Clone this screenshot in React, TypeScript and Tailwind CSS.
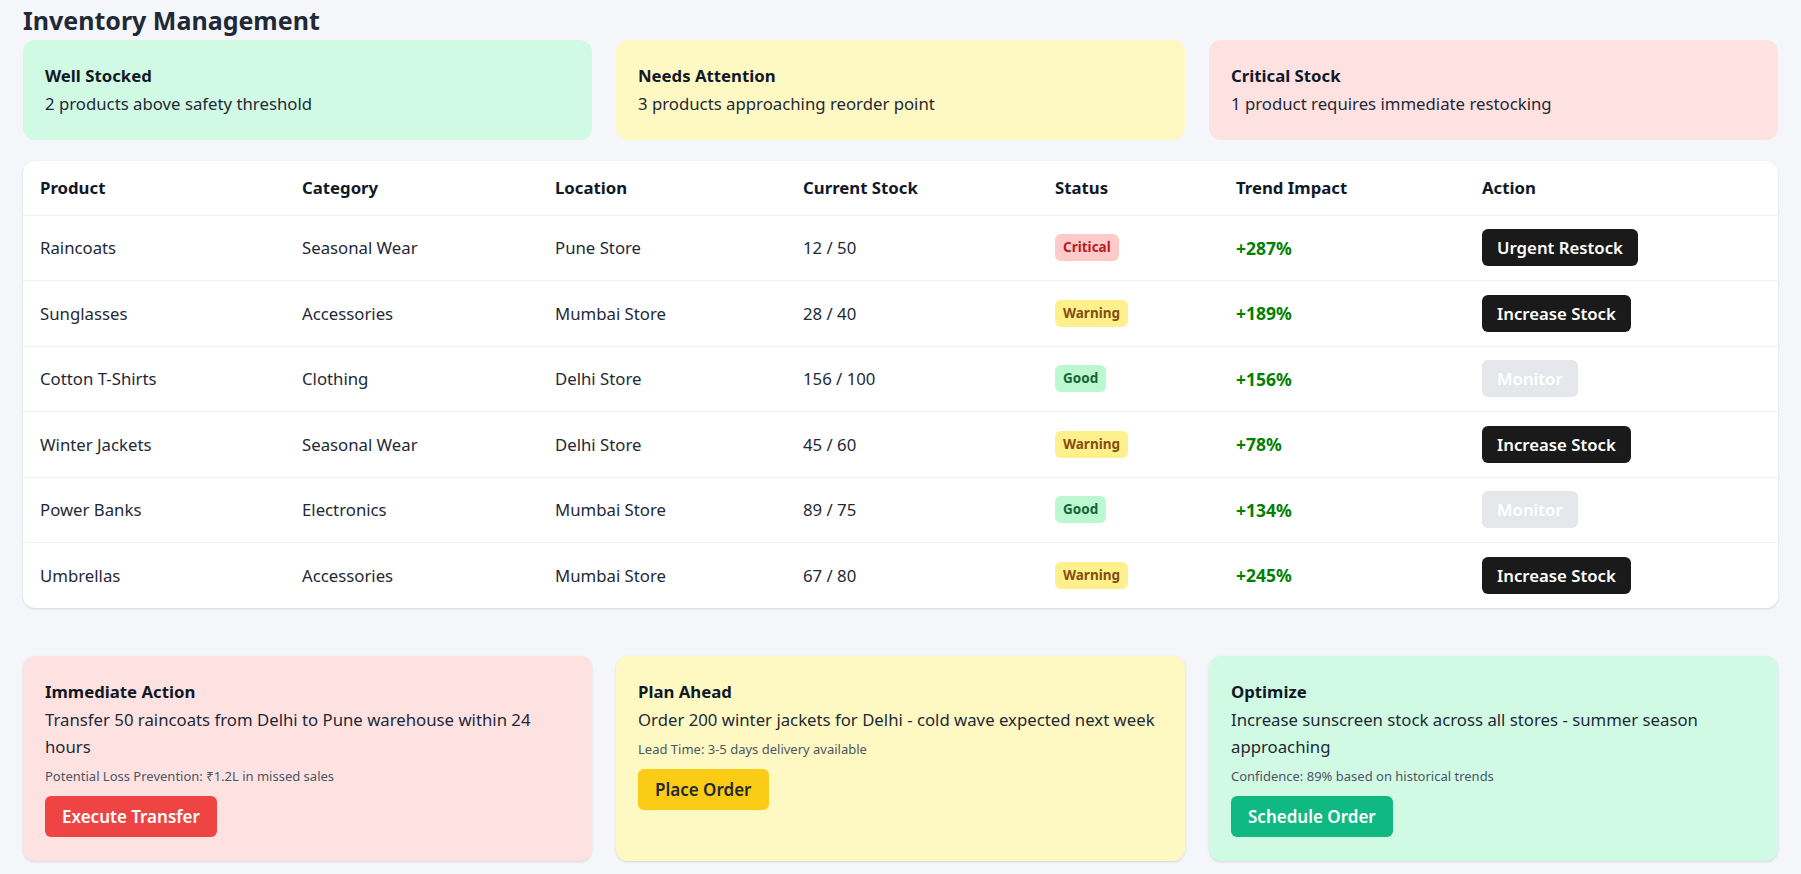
import clsx from 'clsx'

type Status = 'Critical' | 'Warning' | 'Good'

interface Item {
  product: string
  category: string
  location: string
  stock: string
  status: Status
  trend: string
  action: string
}

const ITEMS: Item[] = [
  { product: 'Raincoats', category: 'Seasonal Wear', location: 'Pune Store', stock: '12 / 50', status: 'Critical', trend: '+287%', action: 'Urgent Restock' },
  { product: 'Sunglasses', category: 'Accessories', location: 'Mumbai Store', stock: '28 / 40', status: 'Warning', trend: '+189%', action: 'Increase Stock' },
  { product: 'Cotton T-Shirts', category: 'Clothing', location: 'Delhi Store', stock: '156 / 100', status: 'Good', trend: '+156%', action: 'Monitor' },
  { product: 'Winter Jackets', category: 'Seasonal Wear', location: 'Delhi Store', stock: '45 / 60', status: 'Warning', trend: '+78%', action: 'Increase Stock' },
  { product: 'Power Banks', category: 'Electronics', location: 'Mumbai Store', stock: '89 / 75', status: 'Good', trend: '+134%', action: 'Monitor' },
  { product: 'Umbrellas', category: 'Accessories', location: 'Mumbai Store', stock: '67 / 80', status: 'Warning', trend: '+245%', action: 'Increase Stock' },
]

const BADGE: Record<Status, string> = {
  Critical: 'bg-[#fecaca] text-[#b91c1c]',
  Warning: 'bg-[#fef08a] text-[#854d0e]',
  Good: 'bg-[#bbf7d0] text-[#166534]',
}

const SUMMARY = [
  { title: 'Well Stocked', text: '2 products above safety threshold', bg: 'bg-[#d1fae5]' },
  { title: 'Needs Attention', text: '3 products approaching reorder point', bg: 'bg-[#fef9c3]' },
  { title: 'Critical Stock', text: '1 product requires immediate restocking', bg: 'bg-[#fee2e2]' },
]

const RECS = [
  {
    title: 'Immediate Action',
    text: 'Transfer 50 raincoats from Delhi to Pune warehouse within 24 hours',
    note: 'Potential Loss Prevention: ₹1.2L in missed sales',
    button: 'Execute Transfer',
    bg: 'bg-[#fee2e2]',
    btn: 'bg-[#ef4444] text-white',
  },
  {
    title: 'Plan Ahead',
    text: 'Order 200 winter jackets for Delhi - cold wave expected next week',
    note: 'Lead Time: 3-5 days delivery available',
    button: 'Place Order',
    bg: 'bg-[#fef9c3]',
    btn: 'bg-[#facc15] text-[#1f2937]',
  },
  {
    title: 'Optimize',
    text: 'Increase sunscreen stock across all stores - summer season approaching',
    note: 'Confidence: 89% based on historical trends',
    button: 'Schedule Order',
    bg: 'bg-[#d1fae5]',
    btn: 'bg-[#10b981] text-white',
  },
]

const COLS = [
  { label: 'Product', w: 'w-[262px]' },
  { label: 'Category', w: 'w-[253px]' },
  { label: 'Location', w: 'w-[248px]' },
  { label: 'Current Stock', w: 'w-[252px]' },
  { label: 'Status', w: 'w-[181px]' },
  { label: 'Trend Impact', w: 'w-[246px]' },
  { label: 'Action', w: '' },
]

export default function App() {
  return (
    <div className="min-h-screen bg-[#f5f6fa] px-[23px] pb-6 pt-1 font-['Noto_Sans',sans-serif] text-[#1f2937]">
      <h1 className="mb-1 text-[25px] font-bold leading-8 text-[#1f2937]">Inventory Management</h1>

      <div className="grid grid-cols-3 gap-6">
        {SUMMARY.map((s) => (
          <div key={s.title} className={clsx('rounded-xl px-[22px] py-6', s.bg)}>
            <h3 className="mb-1 text-[16.75px] font-bold leading-6 text-[#111827]">{s.title}</h3>
            <p className="text-[16.75px] leading-6 text-[#1f2937]">{s.text}</p>
          </div>
        ))}
      </div>

      <div className="mt-[21px] overflow-hidden rounded-xl bg-white shadow-sm">
        <table className="w-full table-fixed border-collapse text-left">
          <thead>
            <tr className="h-[54px] border-b border-[#f0f1f3]">
              {COLS.map((c) => (
                <th key={c.label} className={clsx('px-[17px] text-[16.75px] font-bold text-[#111827]', c.w)}>
                  {c.label}
                </th>
              ))}
            </tr>
          </thead>
          <tbody>
            {ITEMS.map((it, i) => (
              <tr key={it.product} className={clsx('h-[65.5px]', i < ITEMS.length - 1 && 'border-b border-[#f0f1f3]')}>
                <td className="px-[17px] text-[16.75px]">{it.product}</td>
                <td className="px-[17px] text-[16.75px]">{it.category}</td>
                <td className="px-[17px] text-[16.75px]">{it.location}</td>
                <td className="px-[17px] text-[16.75px]">{it.stock}</td>
                <td className="px-[17px]">
                  <span className={clsx('inline-block rounded-md px-2 py-1 text-[13.5px] font-bold leading-[19px]', BADGE[it.status])}>
                    {it.status}
                  </span>
                </td>
                <td className="px-[17px] text-[17.5px] font-bold text-[#008000]">{it.trend}</td>
                <td className="px-[17px]">
                  <button
                    className={clsx(
                      'h-[37px] rounded-md px-[15px] text-[16.75px] font-semibold text-white',
                      it.action === 'Monitor' ? 'bg-[#e5e7eb]' : 'bg-[#1a1a1a]'
                    )}
                  >
                    {it.action}
                  </button>
                </td>
              </tr>
            ))}
          </tbody>
        </table>
      </div>

      <div className="mt-12 grid grid-cols-3 gap-6">
        {RECS.map((r) => (
          <div key={r.title} className={clsx('rounded-xl px-[22px] py-6 shadow-sm', r.bg)}>
            <h3 className="mb-0.5 text-[16.75px] font-bold leading-6 text-[#111827]">{r.title}</h3>
            <p className="text-[16.75px] leading-[27px] text-[#1f2937]">{r.text}</p>
            <p className="mt-2 text-[13px] leading-4 text-[#4b5563]">{r.note}</p>
            <button className={clsx('mt-3 h-[41px] rounded-md px-[17px] text-[17px] font-semibold', r.btn)}>{r.button}</button>
          </div>
        ))}
      </div>
    </div>
  )
}
